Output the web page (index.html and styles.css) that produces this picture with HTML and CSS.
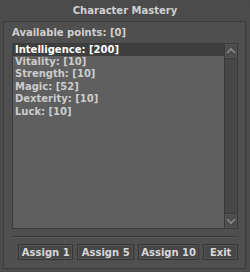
FILE: index.html
```html
<!DOCTYPE html>
<html>
<head>
<meta charset="utf-8">
<link rel="stylesheet" href="styles.css">
</head>
<body>
<div class="window">
  <div class="title">Character Mastery</div>
  <div class="panel">
    <div class="label">Available points: [0]</div>
    <div class="listbox">
      <ul class="items">
        <li class="item selected">Intelligence: [200]</li>
        <li class="item">Vitality: [10]</li>
        <li class="item">Strength: [10]</li>
        <li class="item">Magic: [52]</li>
        <li class="item">Dexterity: [10]</li>
        <li class="item">Luck: [10]</li>
      </ul>
      <div class="scrollbar">
        <div class="sb-btn"><svg width="10" height="8" viewBox="0 0 10 8"><path d="M1 6 L5 2 L9 6" fill="none" stroke="#8a8a8a" stroke-width="1.6"/></svg></div>
        <div class="sb-track"></div>
        <div class="sb-btn"><svg width="10" height="8" viewBox="0 0 10 8"><path d="M1 2 L5 6 L9 2" fill="none" stroke="#8a8a8a" stroke-width="1.6"/></svg></div>
      </div>
    </div>
    <div class="sep"></div>
    <div class="buttons">
      <button class="btn">Assign 1</button>
      <button class="btn">Assign 5</button>
      <button class="btn">Assign 10</button>
      <button class="btn">Exit</button>
    </div>
  </div>
</div>
</body>
</html>
```
FILE: styles.css
```css
html, body { margin: 0; padding: 0; background: #4a4a4a; }
body { width: 250px; height: 272px; overflow: hidden; font-family: "DejaVu Sans", sans-serif; font-weight: bold; font-size: 10px; }
.window { width: 250px; height: 272px; background: #4b4b4b; border-radius: 4px 4px 0 0; box-sizing: border-box; display: flex; flex-direction: column; }
.title { height: 21px; line-height: 22px; text-align: center; color: #d0d0d0; font-size: 10px; }
.panel { margin: 0 4px 3px 3px; flex: 1; border: 1px solid #3c3c3c; background: #4f4f4f; display: flex; flex-direction: column; padding: 0 7px 0 8px; }
.label { height: 21px; line-height: 22px; color: #d0d0d0; }
.listbox { height: 186px; box-sizing: border-box; border: 1px solid #3a3a3a; background: #5f5f5f; display: flex; }
.items { list-style: none; margin: 0; padding: 0; flex: 1; }
.item { height: 12.4px; line-height: 12.4px; padding-left: 2px; color: #cccccc; }
.item.selected { height: 12px; line-height: 12px; background: #3e3e3e; color: #ffffff; }
.scrollbar { width: 12px; display: flex; flex-direction: column; background: #474747; border-left: 1px solid #3a3a3a; }
.sb-btn { height: 14px; display: flex; align-items: center; justify-content: center; background: #4c4c4c; box-shadow: inset 0 0 0 1px #525252; }
.sb-track { flex: 1; border-top: 1px solid #3a3a3a; border-bottom: 1px solid #3a3a3a; }
.sep { height: 0; margin-top: 7px; border-top: 1px solid #3b3b3b; border-bottom: 1px solid #585858; }
.buttons { display: flex; gap: 4px; margin-top: 6px; padding-left: 6px; }
.btn { height: 16px; padding: 0; border: 1px solid #363636; box-shadow: inset 0 0 0 1px #555555; background: #474747; color: #d8d8d8; font-family: "DejaVu Sans", sans-serif; font-weight: bold; font-size: 10px; }
.btn:nth-child(1) { width: 56px; }
.btn:nth-child(2) { width: 57px; }
.btn:nth-child(3) { width: 62px; }
.btn:nth-child(4) { width: 35px; }
```
